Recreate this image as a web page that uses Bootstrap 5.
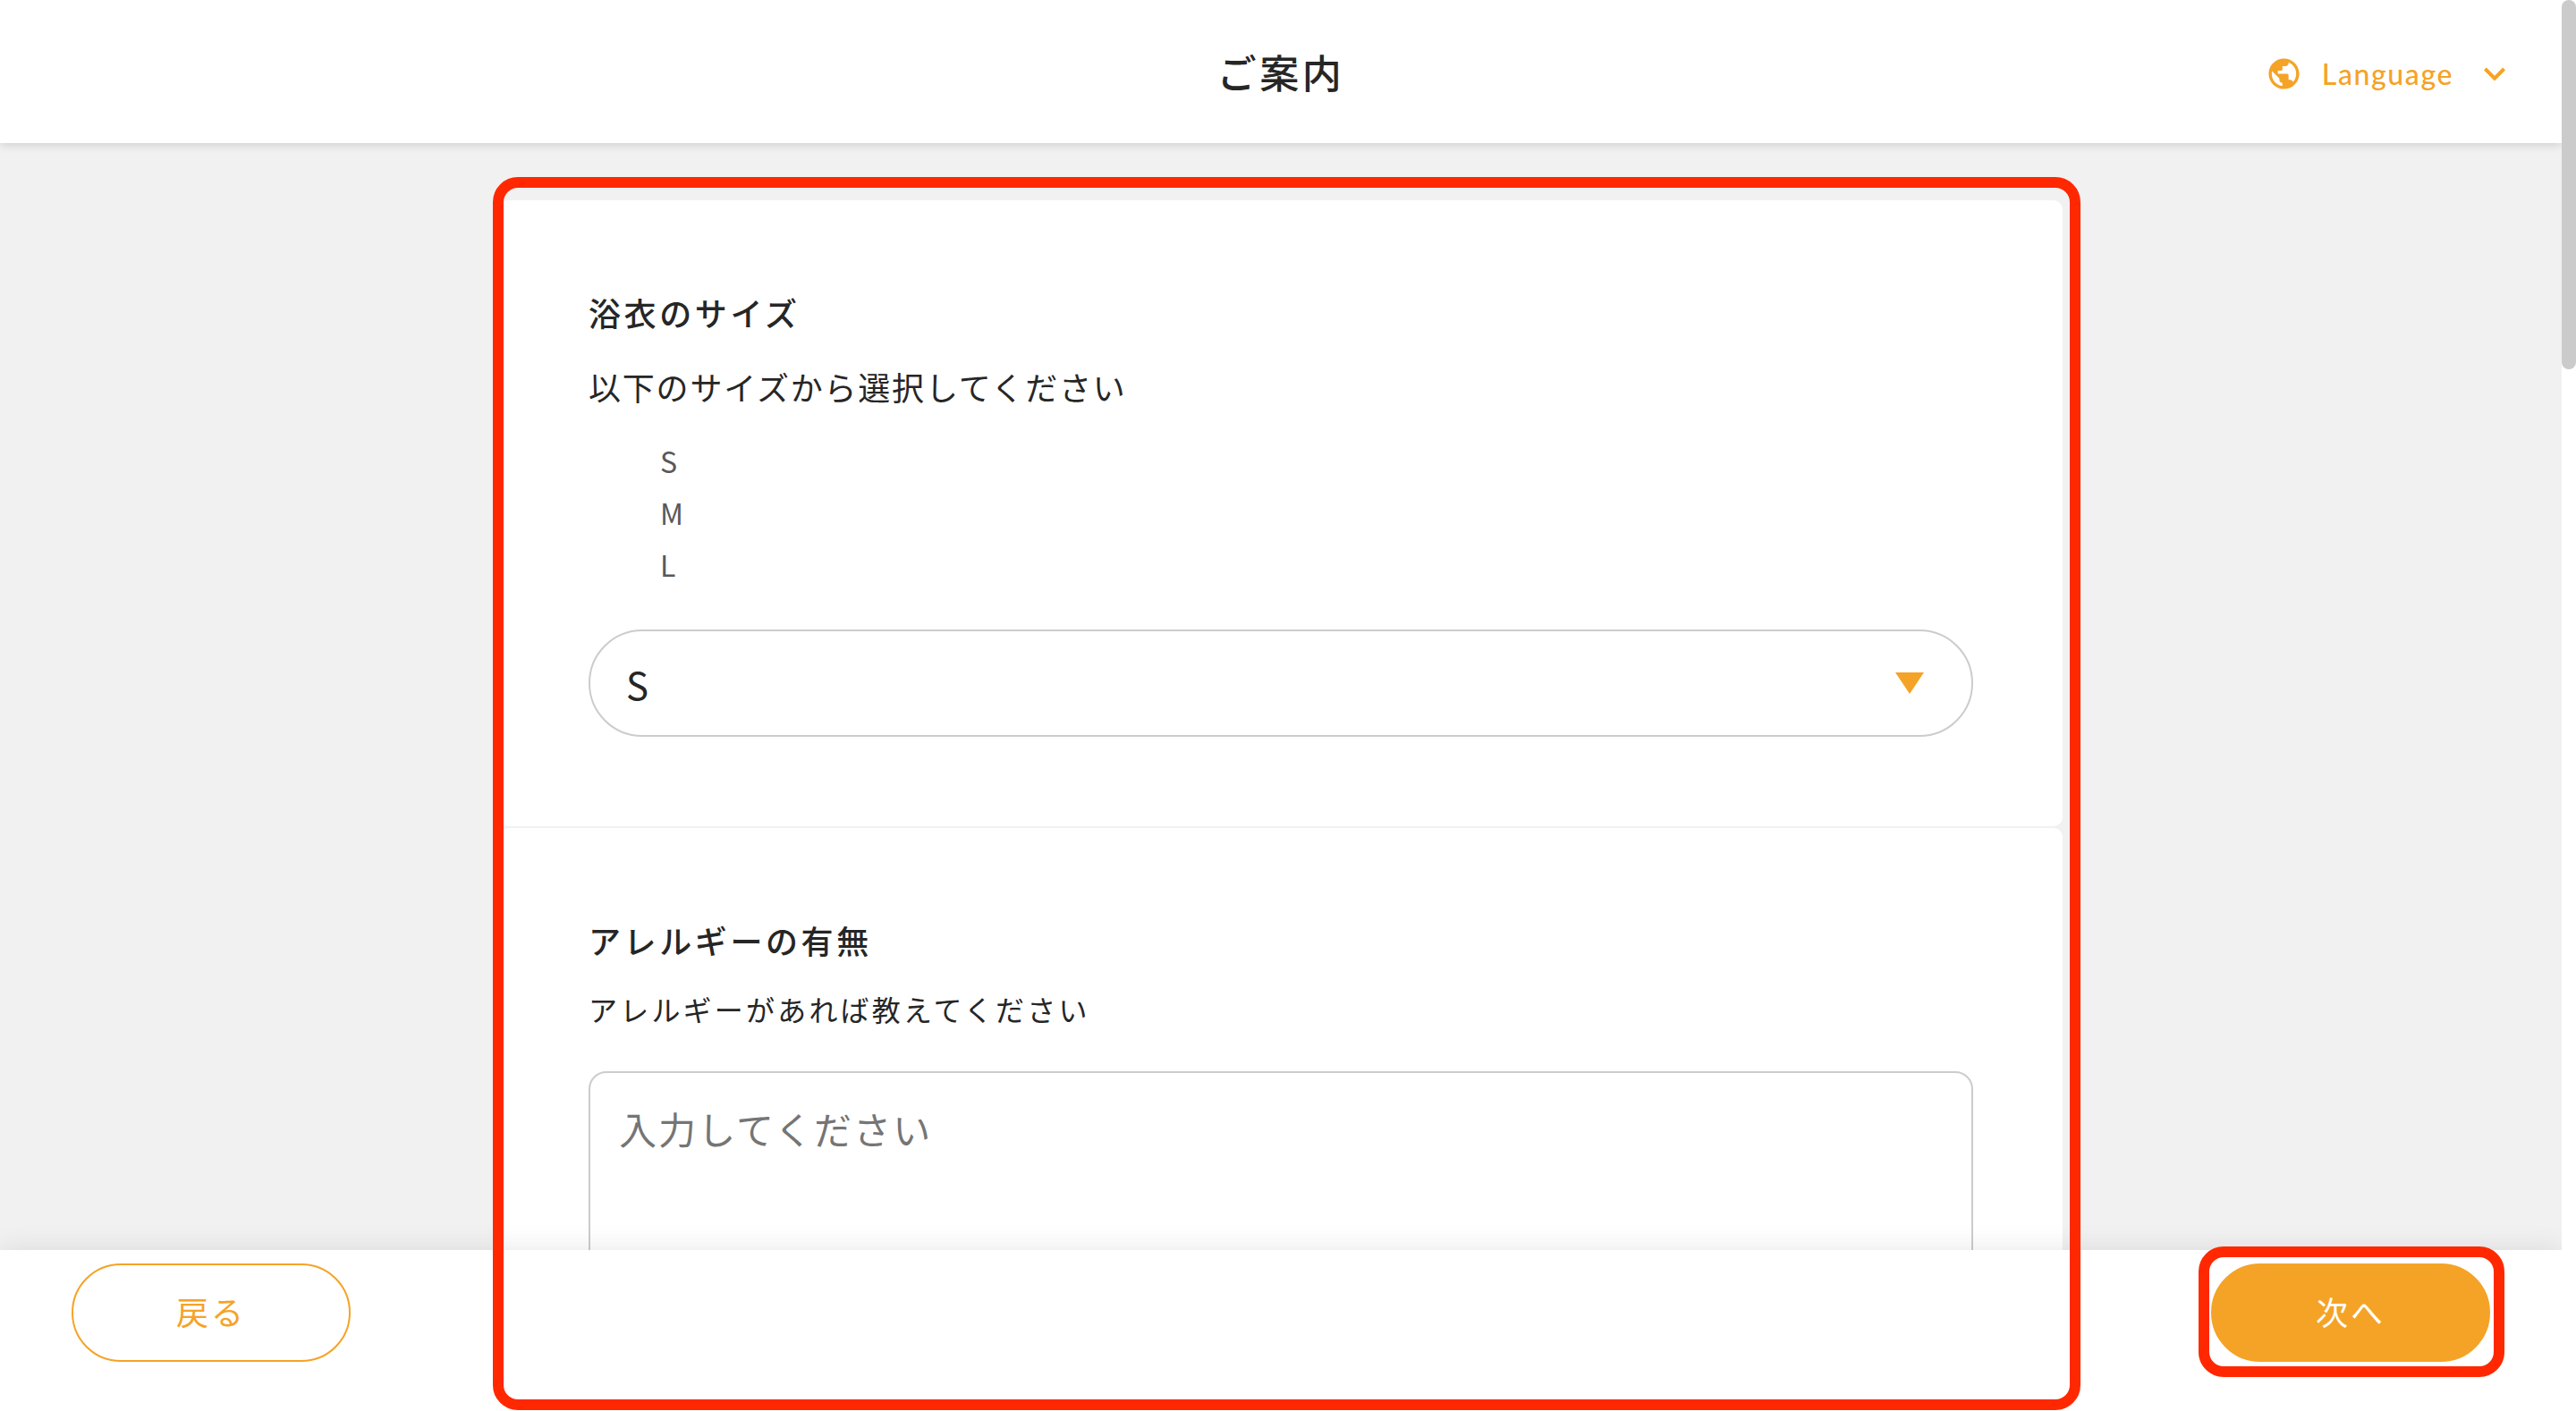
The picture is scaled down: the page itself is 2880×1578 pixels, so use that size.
<!DOCTYPE html>
<html lang="ja">
<head>
<meta charset="utf-8">
<meta name="viewport" content="width=device-width, initial-scale=1">
<title>ご案内</title>
<link href="https://cdn.jsdelivr.net/npm/bootstrap@5.3.0/dist/css/bootstrap.min.css" rel="stylesheet">
<style>
  :root { --accent: #f5a326; --ink: #262626; --line: #cccccc; --frame: #ff2800; }
  body {
    font-family: "Noto Sans CJK JP", "Noto Sans", sans-serif;
    color: var(--ink);
    background: #fff;
  }
  .site-header {
    height: 160px;
    padding: 0 51px;
    box-shadow: 0 2px 10px rgba(0, 0, 0, .15);
    z-index: 2;
  }
  .site-title { font-size: 44px; line-height: 60px; font-weight: 500; letter-spacing: .08em; }
  .lang-btn { color: var(--accent); font-family: Lato, sans-serif; font-size: 32px; line-height: 48px; font-weight: 500; letter-spacing: .05em; gap: 22px; padding: 5px 0 0; }
  .page-body { background: #f1f1f1; padding-top: 64px; min-height: 0; }
  .survey { width: 100%; max-width: 1748px; gap: 2px; }
  .question { background: #fff; border-radius: 10px; padding: 96px 100px 100px; }
  .question-title { font-size: 36px; line-height: 58px; font-weight: 500; letter-spacing: .1em; }
  .question-lead { font-size: 36px; line-height: 60px; letter-spacing: .05em; }
  .question-note { font-size: 32px; line-height: 48px; letter-spacing: .1em; margin-bottom: 46px; }
  .size-list { font-size: 32px; line-height: 58px; color: #595959; padding-left: 80px; margin-bottom: 44px; }
  .field { font-size: 42px; color: var(--ink); border: 2px solid var(--line); background-color: #fff; letter-spacing: .05em; }
  select.field {
    height: 120px;
    border-radius: 60px;
    padding: 0 96px 0 40px;
    background-image: url("data:image/svg+xml,%3Csvg xmlns='http://www.w3.org/2000/svg' viewBox='0 0 32 24'%3E%3Cpath fill='%23f5a326' d='M0 0h32L16 24z'/%3E%3C/svg%3E");
    background-size: 32px 24px;
    background-position: right 53px top 46px;
  }
  textarea.field { height: 320px; border-radius: 20px; padding: 32px; line-height: 60px; resize: none; }
  textarea.field::placeholder { color: #757575; }
  .site-footer { height: 180px; padding: 15px 80px; box-shadow: 0 0 30px rgba(0, 0, 0, .1); z-index: 2; }
  .nav-btn { width: 312px; height: 110px; border-radius: 55px; border: 2px solid var(--accent); font-size: 36px; font-weight: 400; letter-spacing: .08em; padding: 0 0 4px; }
  .nav-btn.back { color: var(--accent); background: #fff; }
  .nav-btn.next { color: #fff; background: var(--accent); }
  .callout-frame { position: absolute; border: 12px solid var(--frame); border-radius: 28px; pointer-events: none; z-index: 3; }
  .frame-survey { top: 198px; bottom: 1px; left: calc(50% - 881px); right: calc(50% - 894px); }
  .frame-next { inset: -19px -16px -17px -14px; }
  .scroll-track { width: 16px; }
  .scroll-thumb { height: 413px; border-radius: 8px; background: #cbcbcb; }
</style>
</head>
<body>
<div class="d-flex vh-100 overflow-hidden">
  <div class="d-flex flex-column flex-grow-1 position-relative overflow-hidden">
    <header class="site-header row g-0 align-items-center flex-shrink-0 bg-white position-relative">
      <div class="col"></div>
      <h1 class="site-title col-auto mb-0">ご案内</h1>
      <div class="col d-flex justify-content-end">
        <button type="button" class="lang-btn btn border-0 d-flex align-items-center">
          <svg width="41" height="41" viewBox="0 0 24 24" fill="currentColor" aria-hidden="true"><path d="M12 2C6.480 2 2 6.480 2 12s4.480 10 10 10 10-4.480 10-10S17.520 2 12 2zm-1 17.930c-3.950-.490-7-3.850-7-7.930 0-.620.080-1.210.210-1.790L9 15v1c0 1.100.900 2 2 2v1.930zm6.900-2.540c-.260-.810-1-1.390-1.900-1.390h-1v-3c0-.550-.450-1-1-1H8v-2h2c.550 0 1-.450 1-1V7h2c1.100 0 2-.900 2-2v-.410c2.930 1.190 5 4.060 5 7.410 0 2.080-.800 3.970-2.100 5.390z"/></svg>
          <span>Language</span>
          <svg width="48" height="48" viewBox="0 0 24 24" fill="currentColor" aria-hidden="true"><path d="M7.410 8.290 12 12.880l4.590-4.590L18 9.710l-6 6-6-6z"/></svg>
        </button>
      </div>
    </header>

    <main class="page-body flex-grow-1 overflow-hidden">
      <form id="survey" class="survey d-flex flex-column mx-auto">
        <section class="question">
          <h2 class="question-title mb-4"><label for="size">浴衣のサイズ</label></h2>
          <p class="question-lead mb-4">以下のサイズから選択してください</p>
          <ul class="size-list list-unstyled">
            <li>S</li>
            <li>M</li>
            <li>L</li>
          </ul>
          <select id="size" class="field form-select">
            <option selected>S</option>
            <option>M</option>
            <option>L</option>
          </select>
        </section>
        <section class="question">
          <h2 class="question-title mb-4"><label for="allergy">アレルギーの有無</label></h2>
          <p class="question-note">アレルギーがあれば教えてください</p>
          <textarea id="allergy" class="field form-control" placeholder="入力してください"></textarea>
        </section>
      </form>
    </main>

    <footer class="site-footer d-flex justify-content-between align-items-start flex-shrink-0 bg-white position-relative">
      <button type="button" class="nav-btn back btn">戻る</button>
      <div class="position-relative">
        <button type="submit" form="survey" class="nav-btn next btn">次へ</button>
        <div class="callout-frame frame-next"></div>
      </div>
    </footer>

    <div class="callout-frame frame-survey"></div>
  </div>
  <div class="scroll-track flex-shrink-0 bg-white"><div class="scroll-thumb"></div></div>
</div>
<script src="https://cdn.jsdelivr.net/npm/bootstrap@5.3.0/dist/js/bootstrap.bundle.min.js"></script>
</body>
</html>
